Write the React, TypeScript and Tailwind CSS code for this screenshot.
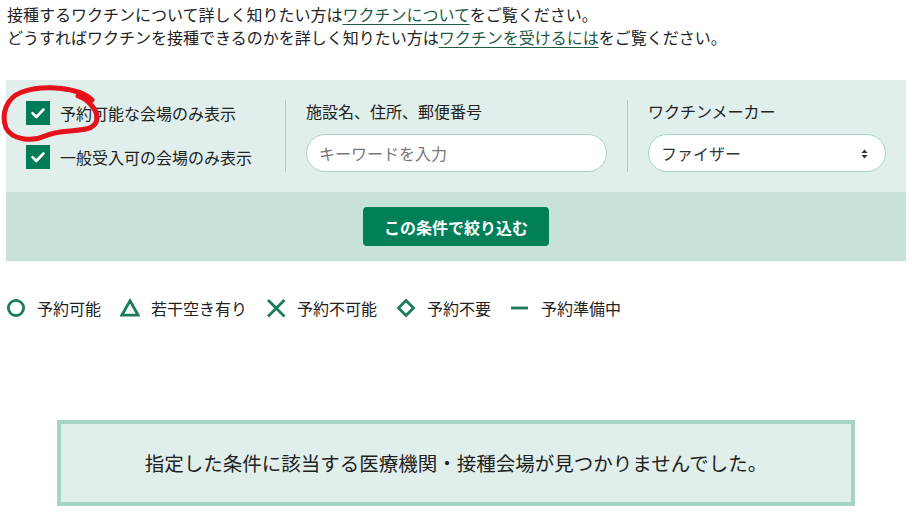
import { useState } from "react";

function CheckBox({ checked, onChange, label }: { checked: boolean; onChange: () => void; label: string }) {
  return (
    <label className="flex items-center h-[28px] cursor-pointer" onClick={onChange}>
      <span className="w-[24px] h-[24px] bg-[#007b57] flex items-center justify-center shrink-0">
        {checked && (
          <svg width="16" height="16" viewBox="0 0 16 16">
            <path d="M2.5 8.2 L6.3 12 L13.5 4.5" fill="none" stroke="white" strokeWidth="2.6" strokeLinecap="round" strokeLinejoin="round" />
          </svg>
        )}
      </span>
      <span className="ml-[10px] text-[16px] leading-[24px] text-[#222]">{label}</span>
    </label>
  );
}

const legend = [
  { key: "circle", label: "予約可能" },
  { key: "triangle", label: "若干空き有り" },
  { key: "cross", label: "予約不可能" },
  { key: "diamond", label: "予約不要" },
  { key: "dash", label: "予約準備中" },
];

function LegendIcon({ kind }: { kind: string }) {
  const c = "#1a7c58";
  return (
    <svg width="20" height="20" viewBox="0 0 20 20">
      {kind === "circle" && <circle cx="10" cy="10" r="7.6" fill="none" stroke={c} strokeWidth="2.8" />}
      {kind === "triangle" && <path d="M10 2.8 L18.2 17.2 L1.8 17.2 Z" fill="none" stroke={c} strokeWidth="2.8" strokeLinejoin="miter" />}
      {kind === "cross" && <path d="M2 2 L18.5 18.5 M18.5 2 L2 18.5" fill="none" stroke={c} strokeWidth="2.8" />}
      {kind === "diamond" && <path d="M10 2.5 L17.5 10 L10 17.5 L2.5 10 Z" fill="none" stroke={c} strokeWidth="2.8" />}
      {kind === "dash" && <path d="M1 10 L18 10" stroke={c} strokeWidth="2.8" />}
    </svg>
  );
}

export default function App() {
  const [onlyOpen, setOnlyOpen] = useState(true);
  const [onlyGeneral, setOnlyGeneral] = useState(true);

  return (
    <div className="relative w-[912px] h-[520px] bg-white overflow-hidden font-['Noto_Sans_CJK_JP','Noto_Sans',sans-serif] text-[#222]">
      {/* Intro */}
      <div className="pt-[3px] pl-[7px] text-[16px] leading-[23px]">
        <p>
          接種するワクチンについて詳しく知りたい方は
          <a href="#" className="text-[#1d5b43] underline underline-offset-[3px]">ワクチンについて</a>
          をご覧ください。
        </p>
        <p>
          どうすればワクチンを接種できるのかを詳しく知りたい方は
          <a href="#" className="text-[#1d5b43] underline underline-offset-[3px]">ワクチンを受けるには</a>
          をご覧ください。
        </p>
      </div>

      {/* Filter panel */}
      <div className="mx-[6px] mt-[31px]">
        <div className="bg-[#e0efeb] flex py-[20px]">
          <div className="w-[279px] px-[20px] flex flex-col gap-[16px] -mt-[1px]">
            <CheckBox checked={onlyOpen} onChange={() => setOnlyOpen(!onlyOpen)} label="予約可能な会場のみ表示" />
            <CheckBox checked={onlyGeneral} onChange={() => setOnlyGeneral(!onlyGeneral)} label="一般受入可の会場のみ表示" />
          </div>
          <div className="w-[342px] px-[20px] border-l border-[#a9d0c4]">
            <div className="text-[16px] leading-[22px]">施設名、住所、郵便番号</div>
            <input
              className="mt-[12px] w-full h-[38px] rounded-full bg-white border border-[#a8d3c6] px-[12px] text-[16px] placeholder:text-[#777] outline-none"
              placeholder="キーワードを入力"
            />
          </div>
          <div className="w-[279px] pl-[20px] pr-[20px] border-l border-[#a9d0c4]">
            <div className="text-[16px] leading-[22px]">ワクチンメーカー</div>
            <div className="mt-[12px] relative h-[38px] rounded-full bg-white border border-[#a8d3c6] flex items-center pl-[12px]">
              <span className="text-[16px] text-[#333]">ファイザー</span>
              <svg className="absolute right-[17px] top-[14px]" width="7" height="10" viewBox="0 0 7 10">
                <path d="M3.5 0.5 L6.5 4 L0.5 4 Z M3.5 9.5 L6.5 6 L0.5 6 Z" fill="#333" />
              </svg>
            </div>
          </div>
        </div>
        <div className="bg-[#c6e2da] h-[69px] flex items-center justify-center">
          <button className="h-[39px] px-[21px] rounded-[4px] bg-[#007f59] text-white font-bold text-[16px]">
            この条件で絞り込む
          </button>
        </div>
      </div>

      {/* Legend */}
      <div className="flex items-center pl-[6px] mt-[35px] h-[24px]">
        {legend.map((l) => (
          <div key={l.key} className="flex items-center mr-[19px]">
            <LegendIcon kind={l.key} />
            <span className="ml-[11px] text-[16px] leading-[24px]">{l.label}</span>
          </div>
        ))}
      </div>

      {/* Empty notice */}
      <div className="mx-auto mt-[100px] w-[798px] h-[86px] border-[4px] border-[#a6d4c6] bg-[#e0efeb] flex items-center justify-center">
        <p className="text-[19.5px] leading-[28px]">指定した条件に該当する医療機関・接種会場が見つかりませんでした。</p>
      </div>

      {/* Red hand-drawn annotation */}
      <svg className="absolute left-0 top-[80px] pointer-events-none" width="110" height="70" viewBox="0 0 110 70">
        <path
          d="M92 20 C80 8, 45 4, 22 12 C6 18, 1 34, 6 48 C12 60, 32 62, 45 56 C58 50, 72 52, 86 49 C100 46, 99 34, 92 26 C88 21, 84 18, 78 16"
          fill="none"
          stroke="#e5121b"
          strokeWidth="5"
          strokeLinecap="round"
          strokeLinejoin="round"
        />
      </svg>
    </div>
  );
}
